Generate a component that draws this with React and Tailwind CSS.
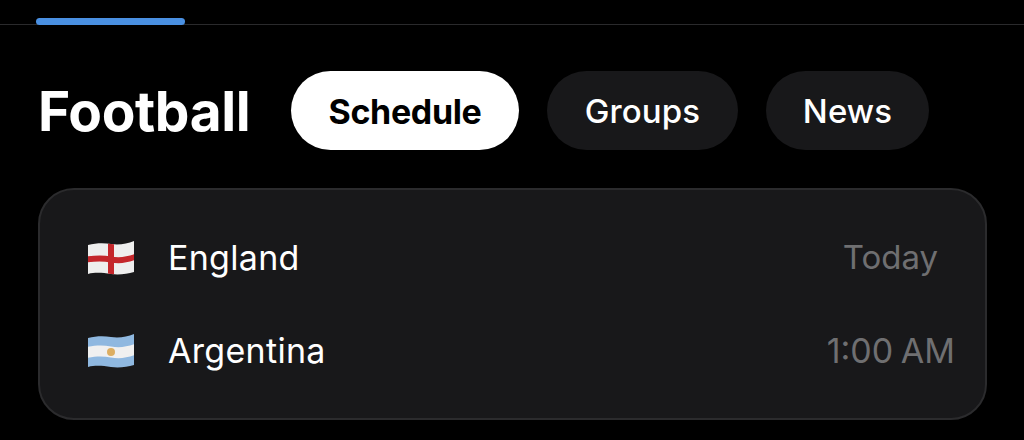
const FLAG_SHAPE = 'M1 4 C9 2 17 2 24 3 C32 4 40 3 47 0 L47 31 C40 33 32 34 24 33 C16 32 9 31 1 33 Z';

const EnglandFlag = () => (
  <svg width="48" height="34" viewBox="0 0 48 34" className="shrink-0">
    <defs>
      <clipPath id="eng">
        <path d={FLAG_SHAPE} />
      </clipPath>
    </defs>
    <g clipPath="url(#eng)">
      <rect width="48" height="34" fill="#eeeeee" />
      <path d="M0 15.5 C9 14 17 14 24 15.5 C32 17 40 16 48 13 L48 19 C40 22 32 23 24 21.5 C16 20 9 20 0 21.5 Z" fill="#c4262b" />
      <path d="M21 0 H27 V34 H21 Z" fill="#c4262b" />
    </g>
  </svg>
);

const ArgentinaFlag = () => (
  <svg width="48" height="34" viewBox="0 0 48 34" className="shrink-0">
    <defs>
      <clipPath id="arg">
        <path d={FLAG_SHAPE} />
      </clipPath>
    </defs>
    <g clipPath="url(#arg)">
      <rect width="48" height="34" fill="#8fb8e0" />
      <path d="M0 13 C9 11 17 11 24 12.5 C32 14 40 13 48 10 L48 21 C40 24 32 25 24 23.5 C16 22 9 22 0 24 Z" fill="#f0f0f0" />
      <circle cx="24" cy="18" r="4" fill="#dcae62" />
    </g>
  </svg>
);

const Pill = ({ label, active, className }) => (
  <div
    className={`h-[79px] pt-[2px] rounded-full flex items-center justify-center ${className} ${
      active
        ? 'bg-white text-black text-[34px] font-bold tracking-[-0.35px]'
        : 'bg-[#18181a] text-white text-[33px] font-medium tracking-[0.1px]'
    }`}
  >
    {label}
  </div>
);

const Row = ({ flag, team, time, timeClass }) => (
  <div className="flex items-center h-[93px]">
    <div className="w-[48px] mr-[33px]">{flag}</div>
    <span className="text-[34px] text-white tracking-[0.3px]">{team}</span>
    <span className={`ml-auto text-[#6f6f71] ${timeClass}`}>{time}</span>
  </div>
);

export default function App() {
  return (
    <div className="w-[1024px] h-[440px] bg-black overflow-hidden font-['Inter',sans-serif]">
      {/* tab indicator */}
      <div className="h-[25px] border-b border-[#2a2a2c] pl-[36px] pt-[18px]">
        <div className="w-[149px] h-[7px] rounded-full bg-[#4a90e2]"></div>
      </div>

      <div className="flex items-center mt-[46px] pl-[38px]">
        <h1 className="w-[253px] pt-[2px] text-[55px] leading-none font-bold text-white tracking-[-0.4px]">Football</h1>
        <div className="flex gap-[28px]">
          <Pill label="Schedule" active className="w-[228px]" />
          <Pill label="Groups" className="w-[191px]" />
          <Pill label="News" className="w-[163px]" />
        </div>
      </div>

      <div className="mt-[38px] ml-[38px] w-[949px] h-[232px] rounded-[36px] bg-[#18181a] border-2 border-[#2b2b2d] pl-[47px] pr-[30px] pt-[21px]">
        <Row flag={<EnglandFlag />} team="England" time="Today" timeClass="text-[33px] mr-[17px]" />
        <Row flag={<ArgentinaFlag />} team="Argentina" time="1:00 AM" timeClass="text-[34px] [word-spacing:-2px]" />
      </div>
    </div>
  );
}
